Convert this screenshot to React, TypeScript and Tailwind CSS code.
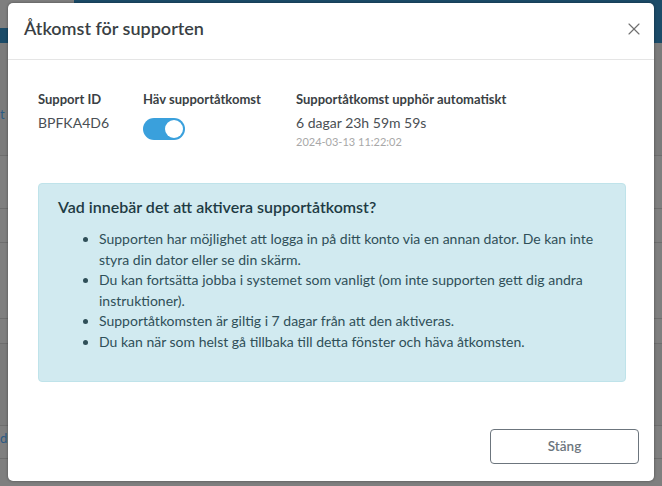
import { X } from "lucide-react";

const bullets = [
  "Supporten har möjlighet att logga in på ditt konto via en annan dator. De kan inte styra din dator eller se din skärm.",
  "Du kan fortsätta jobba i systemet som vanligt (om inte supporten gett dig andra instruktioner).",
  "Supportåtkomsten är giltig i 7 dagar från att den aktiveras.",
  "Du kan när som helst gå tillbaka till detta fönster och häva åtkomsten.",
];

const Backdrop = () => (
  <div className="absolute inset-0 flex flex-col bg-[#7f7f7f]">
    <div className="flex h-[43px]">
      <div className="flex w-[74px] flex-col">
        <div className="h-[28px] bg-[#7f7f7f]" />
        <div className="flex-1 bg-[#1b4b68]" />
      </div>
      <div className="flex-1 bg-[#1b4b68]" />
    </div>
    <div className="h-[112px] bg-[#7b7b7b] pt-[62px] text-[13px] text-[#2b5b85]">t .</div>
    <div className="h-[53px] border-t border-[#6e6e6e]" />
    <div className="h-[34px] border-t border-[#6e6e6e]" />
    <div className="h-[76px] border-t border-[#6e6e6e]" />
    <div className="h-[25px] border-t border-[#6e6e6e]" />
    <div className="h-[82px] border-t border-[#6e6e6e] bg-[#7b7b7b]" />
    <div className="h-[33px] border-t border-[#6e6e6e] pt-[3px] text-[13px] leading-[18px] text-[#2b5b85]">d</div>
    <div className="flex-1 border-t border-[#6e6e6e]" />
  </div>
);

export default function App() {
  return (
    <div className="relative h-[486px] w-[662px] overflow-hidden font-['Lato',sans-serif]">
      <Backdrop />
      <div className="absolute left-[8px] top-[3px] flex h-[478px] w-[646px] flex-col rounded-[5px] bg-white shadow-[0_0_3px_rgba(0,0,0,0.4)]">
        <div className="flex h-[57px] items-center justify-between border-b border-[#e5e5e5] pb-[5px] pl-4 pr-[10px]">
          <h2 className="text-[18px] font-semibold text-[#3a3f44]">Åtkomst för supporten</h2>
          <X className="h-[20px] w-[20px] text-[#707070]" strokeWidth={1.4} />
        </div>

        <div className="flex-1 pl-[30px] pr-[28px] pt-[30px]">
          <div className="flex">
            <div className="w-[105px]">
              <div className="text-[13px] font-bold leading-[18px] text-[#3a3f44]">Support ID</div>
              <div className="mt-[6px] text-[14px] leading-[18px] text-[#4a4f54]">BPFKA4D6</div>
            </div>
            <div className="w-[153px]">
              <div className="text-[13px] font-bold leading-[18px] text-[#3a3f44]">Häv supportåtkomst</div>
              <div className="mt-[10px] flex h-[22px] w-[42px] items-center justify-end rounded-full bg-[#3aa0dc] pr-[2px]">
                <div className="h-[18px] w-[18px] rounded-full bg-white" />
              </div>
            </div>
            <div>
              <div className="text-[13px] font-bold leading-[18px] text-[#3a3f44]">
                Supportåtkomst upphör automatiskt
              </div>
              <div className="mt-[6px] text-[14px] leading-[18px] text-[#4a4f54]">6 dagar 23h 59m 59s</div>
              <div className="text-[11px] leading-[20px] text-[#a8a8a8]">2024-03-13 11:22:02</div>
            </div>
          </div>

          <div className="mt-[31px] h-[199px] rounded-[4px] border border-[#bfe3ea] bg-[#d1eaf0] pl-[19px] pr-[10px] pt-[13px]">
            <h3 className="text-[16px] font-semibold leading-[20px] text-[#1e3b44]">
              Vad innebär det att aktivera supportåtkomst?
            </h3>
            <ul className="mt-[12px] list-disc pl-[41px] text-[14px] leading-[20.6px] text-[#2f4f58]">
              {bullets.map((b) => (
                <li key={b}>{b}</li>
              ))}
            </ul>
          </div>
        </div>

        <div className="flex justify-end pb-[17px] pr-[15px]">
          <button className="h-[35px] w-[149px] rounded-[4px] border border-[#6c757d] text-[13.5px] font-semibold text-[#6c757d]">
            Stäng
          </button>
        </div>
      </div>
    </div>
  );
}
